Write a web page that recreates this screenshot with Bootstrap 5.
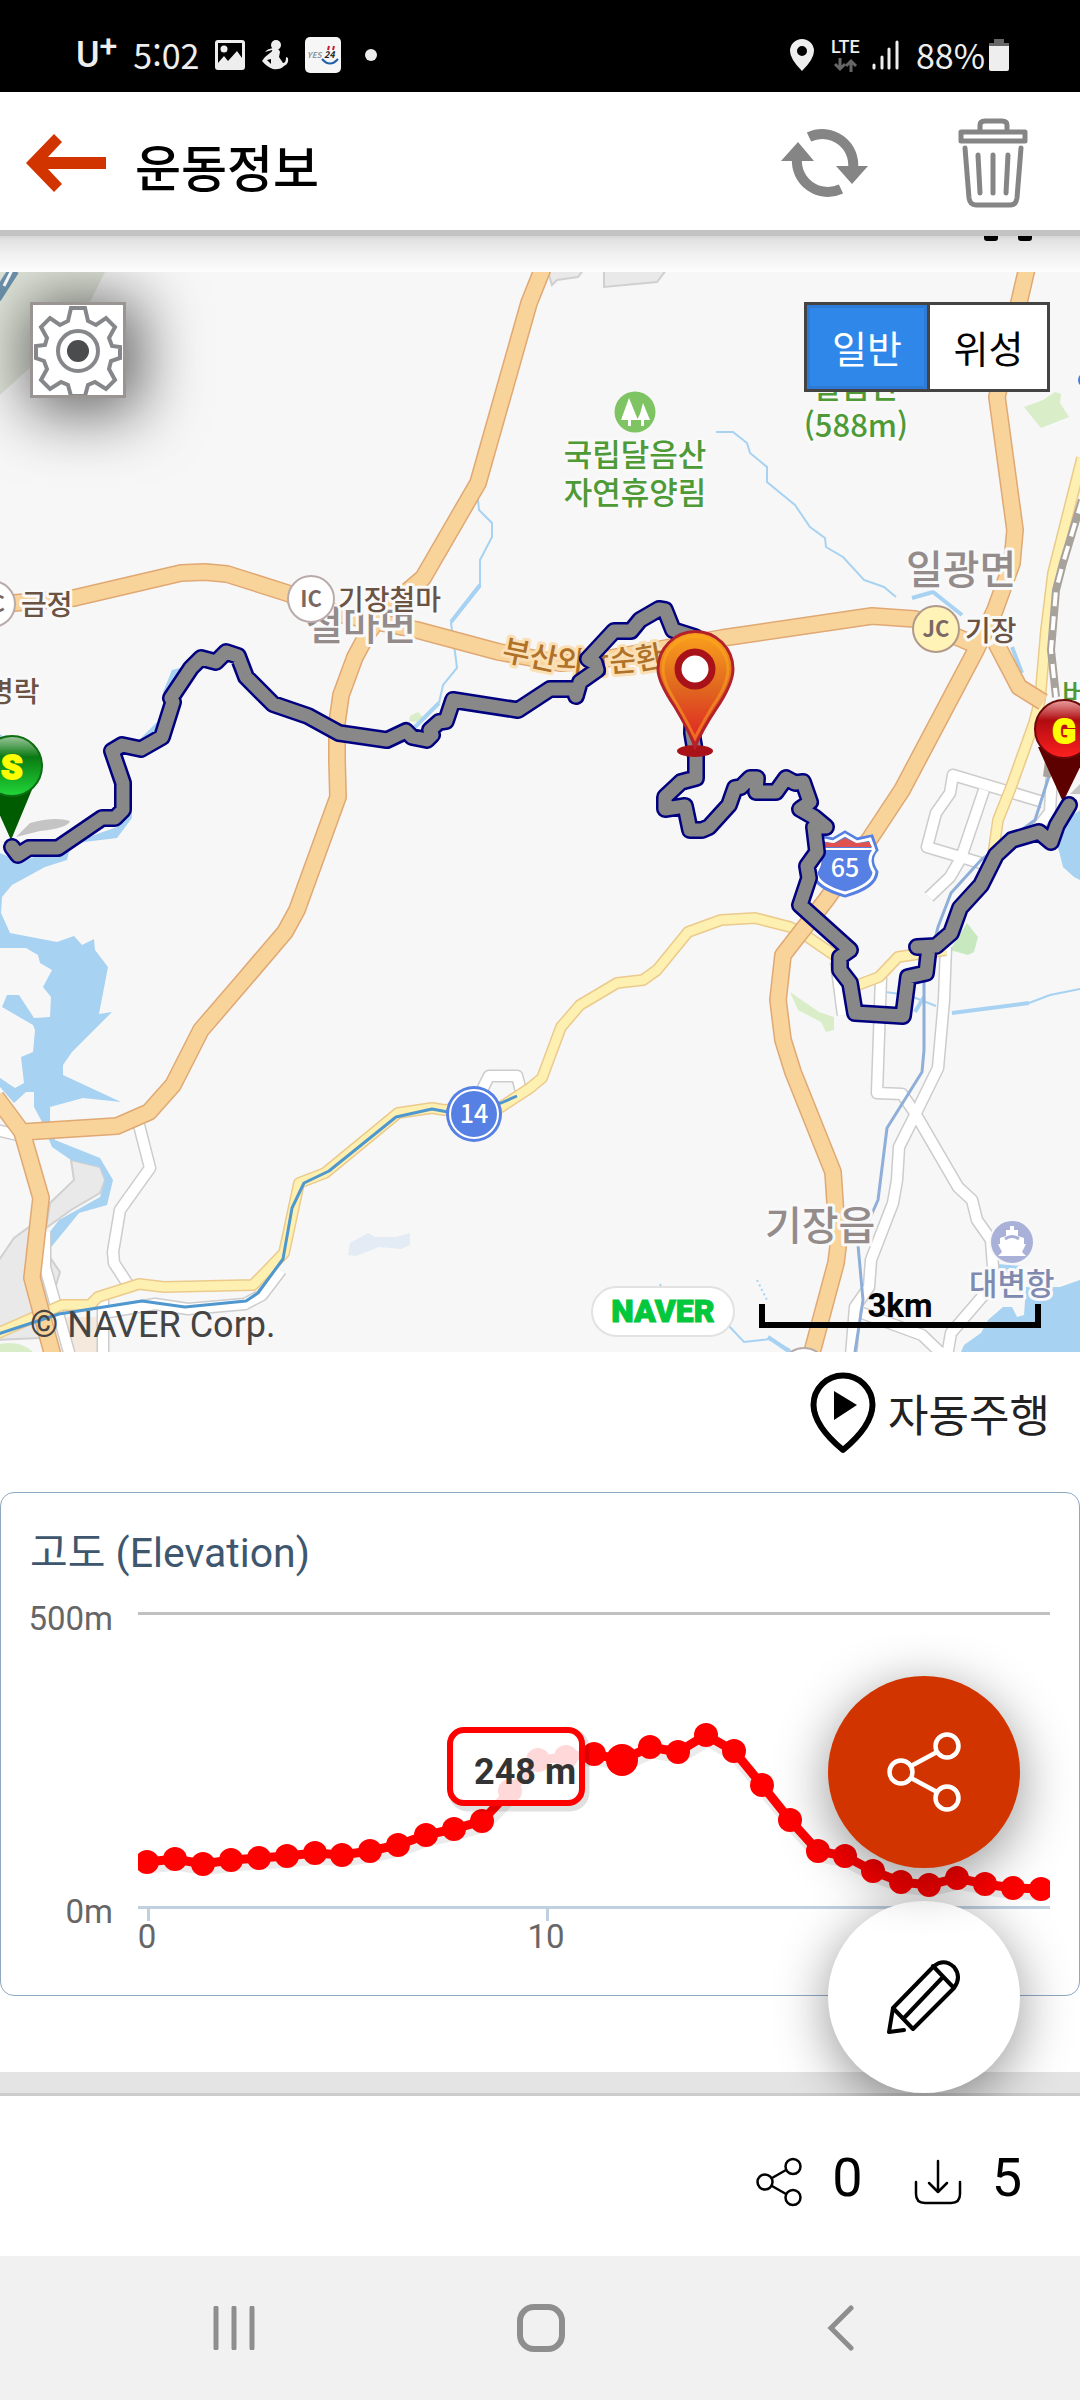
<!DOCTYPE html>
<html lang="ko">
<head>
<meta charset="utf-8">
<meta name="viewport" content="width=device-width, initial-scale=1">
<title>운동정보</title>
<link rel="stylesheet" href="https://cdn.jsdelivr.net/npm/bootstrap@5.3.0/dist/css/bootstrap.min.css">
<style>
  body { font-family: Roboto, "Noto Sans CJK KR", sans-serif; color: #000; background: #fff; }
  svg { display: block; flex: none; }
  .bare { background: none; border: 0; padding: 0; color: inherit; }
  .statusbar { height: 92px; background: #000; color: #eee; padding: 18px 71px 0 76px; font-family: "Noto Sans CJK KR", sans-serif; font-size: 34px; line-height: 40px; }
  .carrier { font: 500 36px/40px Roboto, sans-serif; }
  .carrier sup { font-size: 32px; line-height: 0; top: -10px; }
  .appbar { height: 144px; border-bottom: 6px solid #c3c3c3; padding: 4px 52px 0 26px; }
  .appbar h1 { font: 500 50px/60px "Noto Sans CJK KR", sans-serif; margin: 0 0 0 28px; padding-top: 4px; }
  .shade { height: 36px; background: linear-gradient(#d6d6d6 0, #e2e2e2 4px, #f0f0f0 18px, #fdfdfd 36px); padding-right: 48px; }
  .corner { width: 14px; height: 5px; background: #000; border-radius: 0 0 3px 3px; }
  .mapbox { background: #f7f7f7; overflow: hidden; }
  .mapbox > svg { width: 100%; height: auto; font-family: "Noto Sans CJK KR", sans-serif; font-weight: 500; }
  .casing, .fillroad, .route { fill: none; stroke-linejoin: round; }
  .halo { paint-order: stroke; stroke: #f9f9f9; stroke-width: 6px; stroke-linejoin: round; }
  .gear { position: absolute; left: 30px; top: 30px; width: 96px; height: 96px; background: #fff; border: 3px solid #9a9492; padding: 0; box-shadow: 6px 6px 64px 8px rgba(0,0,0,.62); }
  .maptype { position: absolute; right: 30px; top: 30px; border: 3px solid #444; background: #fff; }
  .maptype label { width: 120px; height: 84px; font: 400 38px/84px "Noto Sans CJK KR", sans-serif; text-align: center; cursor: pointer; }
  .maptype label + input + label { border-left: 3px solid #444; }
  .maptype .btn-check:checked + label { background: #3087ea; color: #fff; box-shadow: inset 0 0 0 3px #2d7bd6; }
  .credit { position: absolute; left: 30px; bottom: 5px; font-size: 36px; line-height: 44px; color: #444; }
  .mapfoot { position: absolute; right: 39px; bottom: 15px; gap: 24px; }
  .naverpill { width: 144px; height: 51px; border: 2px solid #e2e2e2; border-radius: 26px; background: #fff; color: #03c73c; font: 900 32px/47px Roboto, sans-serif; text-align: center; text-decoration: none; -webkit-text-stroke: 1px #03c73c; }
  .scalebar { width: 282px; height: 24px; border: 6px solid #000; border-top: 0; margin-top: 18px; margin-bottom: 9px; font: 700 33px/24px Roboto, sans-serif; text-align: center; }
  .scalebar span { display: block; margin-top: -10px; }
  .autorun { height: 140px; padding: 0 30px 18px 0; }
  .autorun button { font: 400 44px/60px "Noto Sans CJK KR", sans-serif; color: #222; gap: 12px; }
  .elev { border: 1px solid #8ea8c3; border-radius: 14px; overflow: hidden; background: #fff; }
  .elev h2 { font: 400 41px/50px Roboto, "Noto Sans CJK KR", sans-serif; color: #3e576f; margin: 0; padding: 35px 29px 0; }
  .elev svg { width: 100%; height: auto; font-family: Roboto, sans-serif; font-size: 33px; fill: #666; }
  .strip { height: 24px; margin-top: 76px; background: #e4e4e4; border-bottom: 3px solid #ccc; }
  .content { overflow: hidden; }
  .fabs { position: absolute; right: 60px; bottom: 3px; gap: 33px; }
  .fab { width: 192px; height: 192px; border-radius: 50%; border: 0; padding: 0; box-shadow: 0 12px 54px rgba(0,0,0,.42); }
  .fab.share { background: #d23400; position: relative; z-index: 1; }
  .fab.pen { background: #fff; }
  .counts { height: 160px; padding: 4px 58px 0 0; font-size: 54px; line-height: 60px; }
  .androidnav { height: 144px; background: #f1f1f1; padding: 0 94px 0 82px; }
</style>
<script src="https://cdn.jsdelivr.net/npm/bootstrap@5.3.0/dist/js/bootstrap.bundle.min.js"></script>
</head>
<body>

<div class="statusbar d-flex align-items-center justify-content-between">
  <div class="d-flex align-items-center">
    <span class="carrier me-3">U<sup>+</sup></span>
    <span>5:02</span>
    <svg class="ms-3" width="30" height="30" viewBox="0 0 30 30"><path fill="#eee" fill-rule="evenodd" d="M3 0h24q3 0 3 3v24q0 3-3 3H3q-3 0-3-3V3q0-3 3-3zM3 3v20l6-7 4 5 9-10 5 7V3z"/><circle cx="9" cy="9" r="3.500" fill="#eee"/></svg>
    <svg class="ms-3" width="28" height="30" viewBox="0 0 28 30"><circle cx="15" cy="5" r="5" fill="#eee"/><path fill="#eee" d="M12 8q6 0 7 4l-1 5 4 6q3 0 3-6l2 1q1 6-4 8-4 4-11 3-6-2-11-8l3-4 5-4q3-2 2-3l-7 2q2-3 8-4zM6 20l4 4v-5z" fill-rule="evenodd"/></svg>
    <svg class="ms-3" width="36" height="36" viewBox="0 0 36 36"><rect width="36" height="36" rx="5" fill="#f6f6f6"/><text x="2" y="21" font-size="8" font-weight="700" font-style="italic" fill="#8b98a5">YES</text><text x="19" y="21" font-size="9" font-weight="700" font-style="italic" fill="#222">24</text><path d="M24 9l-1 4M29 9l-1 4" stroke="#c9202c" stroke-width="2"/><path d="M17 22q8 9 16 0" stroke="#1f5fa8" stroke-width="2" fill="none"/></svg>
    <svg class="ms-4" width="12" height="12"><circle cx="6" cy="6" r="6" fill="#eee"/></svg>
  </div>
  <div class="d-flex align-items-center">
    <svg width="24" height="32" viewBox="0 0 24 32"><path fill="#eee" fill-rule="evenodd" d="M12 0a12 12 0 0 1 12 12q0 8-12 20Q0 20 0 12A12 12 0 0 1 12 0zm0 7a5 5 0 1 0 0 10 5 5 0 0 0 0-10z"/></svg>
    <svg class="ms-3" width="34" height="38" viewBox="0 -2 34 38"><text x="1" y="15" font-family="Roboto, sans-serif" font-weight="500" font-size="18" fill="#eee">LTE</text><path d="M10 20v9m-5-3 5 5 5-5M21 34v-9m-5 3 5-5 5 5" fill="none" stroke="#666" stroke-width="3"/></svg>
    <svg class="ms-2" width="28" height="32" viewBox="0 0 28 32"><path d="M2 29v-3M10 29V18M17 29V10M25 29V3" stroke="#eee" stroke-width="3" stroke-linecap="round"/></svg>
    <span class="ms-3">88%</span>
    <svg class="ms-1" width="20" height="32" viewBox="0 0 20 32"><path d="M5 0h10v4h5v4H0V4h5z" fill="#666"/><path d="M0 7h20v23q0 2-2 2H2q-2 0-2-2z" fill="#eee"/></svg>
  </div>
</div>

<header class="appbar d-flex align-items-center bg-white">
  <button class="bare" type="button" aria-label="뒤로"><svg width="81" height="58" viewBox="0 0 81 58"><path d="M0 29 28 0l8 8-14 15h58v12H22l14 15-8 8z" fill="#d23400"/></svg></button>
  <h1>운동정보</h1>
  <button class="bare ms-auto" type="button" aria-label="새로고침"><svg width="88" height="72" viewBox="0 0 88 72"><g fill="none" stroke="#858585" stroke-width="10"><path d="M28 10A31 31 0 0 1 72 42"/><path d="M60 62A31 31 0 0 1 16 31"/></g><path d="M55 39h32L71 57zM0 34h33L17 15z" fill="#858585"/></svg></button>
  <button class="bare" type="button" aria-label="삭제" style="margin-left:89px"><svg width="70" height="90" viewBox="0 0 70 90" fill="none" stroke="#858585" stroke-width="5" stroke-linecap="round" stroke-linejoin="round"><path d="M22 11V7q0-4 5-4h17q5 0 5 4v4M3 14h64v9H3zM7 30l4 50q1 7 7 7h34q6 0 7-7l4-50M20 37l2 38M35 37v38M50 37l-2 38"/></svg></button>
</header>
<div class="shade d-flex justify-content-end"><span class="corner"></span><span class="corner" style="margin-left:20px"></span></div>

<main class="content position-relative">
  <section class="mapbox position-relative">
    <svg viewBox="0 0 1080 1080" role="img" aria-label="지도">
      <defs>
        <linearGradient id="gPin" x1="0" y1="0" x2="0" y2="1"><stop offset="0" stop-color="#fba31c"/><stop offset=".5" stop-color="#e0661f"/><stop offset="1" stop-color="#e01c26"/></linearGradient>
        <linearGradient id="gS" x1="0" y1="0" x2="0" y2="1"><stop offset="0" stop-color="#9fc79f"/><stop offset=".35" stop-color="#0a7a12"/><stop offset="1" stop-color="#22d83a"/></linearGradient>
        <linearGradient id="gG" x1="0" y1="0" x2="0" y2="1"><stop offset="0" stop-color="#e9a0a0"/><stop offset=".35" stop-color="#b00c10"/><stop offset="1" stop-color="#ff2020"/></linearGradient>
        <path id="hw" d="M543-4 529 31 478 211 423 306 385 338 368 361 355 385 341 423 337 451 337 488 338 525 297 638 285 660 244 708 201 758 173 813 149 840 117 854 22 860M-4 825 22 860 41 926 32 1006 53 1084M-4 334 14 331 74 326 181 301 205 300 227 302 287 321 339 342 417 358 499 380 560 391 600 388 722 366 872 344 915 347 971 371M1027-4 997 125 1015 258 1012 291 995 338 976 378 902 518 871 565 826 628 783 683 778 728 783 768 793 800 833 900 838 975 836 991 811 1084M996 371 1019 415 1043 430"/>
        <path id="yl" d="M1082 186 1053 301 1046 358 1040 428 1034 451 1010 518 998 548 992 590M946 678 898 685 879 705 850 716M834 683 802 661 790 655 755 646 721 648 688 660 657 698 643 708 617 711 580 733 561 755 542 806 530 816 501 835 444 838 432 836 398 841 325 901 299 911 284 981 253 1013 164 1015 139 1012 98 1025 90 1033 62 1033-4 1062"/>
        <path id="wt" d="M139 853 150 896 120 938 113 980 114 991 129 1014M281 998 262 1023 245 1032 188 1037 155 1032 103 1041M103 1028V1084M45 960V995L70 1084M-4 858 18 863M482 818 489 804H517L522 823M1043 530 953 503 950 521 936 541 927 575 984 592M984 518 961 586 950 605 929 625M1053 480 1050 540 1030 565M946 675 944 728 938 796 915 843 899 875 897 908 893 931 871 988 869 1015 855 1035 851 1084M881 705 877 821 902 822 915 841 958 915 972 928 977 948 991 968 993 995 988 1018 951 1061 947 1084M862 1041 922 1063 944 1084M836 690 843 743"/>
        <path id="track" d="M12 575 18 583 29 576H58L102 546H115L123 538V511L112 479 122 473 141 477 162 465 173 430 171 426 191 396 201 386 216 390 226 380 238 384 246 405 273 432 308 444 339 461 387 468 406 459 412 465 427 468 432 463 430 458 439 450 446 449 453 428 518 438 550 417H574L576 424 580 410 597 398 595 391 588 387 614 359H631L640 348 659 337 665 338 673 358 695 365 692 461 696 485V506L681 510 665 525V537L685 534 690 558H702L709 555 729 533 735 516 741 515 750 506H757L756 520H776L786 506 795 511 803 510 810 530 800 537 814 545 826 555H814L817 580 807 594 809 606 800 633 850 678 840 685V698L850 711 855 741 903 744 908 705 926 701 929 675H917L936 674 951 661 960 636 981 613 996 583 1012 568 1039 560 1051 570 1057 553 1069 533"/>
        <path id="beltway" d="M501 388 545 397 590 402 640 398 690 389"/>
      </defs>
      <!-- land use -->
      <path fill="#e2e7dc" d="M0 0H105L80 50 0 123z"/>
      <path d="M14-2-4 26" stroke="#6d93ad" stroke-width="11"/><path d="M12-2 4 14" stroke="#fff" stroke-width="3"/>
      <g fill="#e9e9e9" stroke="#d0d0d0" stroke-width="2"><path d="M604-3V15L657 10 667-3zM547-3 552 13 557 8 578 5 584-3zM29 955 14 966-3 991V1068L40 1066 60 1000zM71 888 74 908 50 931 46 956 71 938 100 921 105 908 100 895z"/></g>
      <path fill="#d9edc8" d="M1024 135 1043 128 1055 120 1061 122 1060 131 1069 145 1041 156 1032 145zM790 720 819 740 834 745V758L826 760 821 750 798 738zM0 1072Q20 1068 33 1080H0zM410 444l8-4 5 5-6 5-8-1z"/>
      <path fill="#c8e8c0" d="M950 678 967 651 978 665 974 680 968 683z"/>
      <path fill="#f5e8dc" d="M66 1045H98V1080H72z"/>
      <path fill="#e3ebf4" d="M348 983 350 971 368 961 375 965H396L410 961V973L401 977 379 975 356 984z"/>
      <!-- water -->
      <g fill="#a7d2f2"><path d="M0 581 21 590 69 572 117 555 131 528 132 546 117 566 84 570 70 576 67 588 45 595 12 613 2 625 1 641 10 661 57 670 74 664 82 673 94 667 95 678 108 695 103 721 99 742 112 740 72 780 63 793V803L121 830 83 826 50 835V848L55 868 100 886 113 908 107 933 79 941 48 979 46 965 59 948 100 925 105 908 100 895 71 888 52 875 41 848 34 835V820H26L14 831 0 815V806L15 816 24 811 21 785 33 780 35 758 33 753 2 735 7 723H19L34 746 50 745 51 725 43 715 52 698 40 691 38 683 26 676H0zM172 398 180 396 168 425 163 420zM157 450 139 468H160zM1058 575 1070 545 1080 538V608L1074 605 1063 595zM961 1080 964 1073 981 1061 988 1048 1003 1035H1012L1017 1045 1024 1043 1026 1015H1060L1080 1008V1080zM0 462 10 470-2 540zM997 992 1022 994 1015 1008 1003 1006z"/></g>
      <g fill="none" stroke="#a7d2f2"><path stroke-width="2" d="M478 228 479 238 492 251V265L480 288V315L451 351 456 388 457 396 443 413 439 431M716 160H733L747 171 750 181 767 195V210L795 233 810 255 825 266 826 275 843 285 864 308 884 315 896 325M1029 731 1050 723 1080 717M728 1053 744 1070 770 1067 790 1078M885 720 908 723 936 734M660 1012 662 1017"/><path stroke-width="4" d="M480 313 451 350M439 431 415 455M912 326 933 320 962 343M952 741 1029 731M1012 375 1022 401M768 1065 790 1080M915 740 924 725"/></g>
      <path d="M757 1008 768 1030" stroke="#a7d2f2" stroke-width="2" stroke-dasharray="2 3"/>
      <!-- minor roads -->
      <use href="#wt" class="casing" stroke="#ccc" stroke-width="13"/><use href="#wt" class="fillroad" stroke="#fff" stroke-width="10"/>
      <path class="casing" stroke="#8fafd8" stroke-width="3" d="M1050 501 1035 548 981 588 951 621 938 655 924 711V778L922 800 887 856 878 928 858 973 863 1028 855 1080"/>
      <use href="#yl" class="casing" stroke="#ebca8c" stroke-width="12"/><use href="#yl" class="fillroad" stroke="#fef0b0" stroke-width="9"/>
      <path class="casing" stroke="#a8a29c" stroke-width="8" d="M1082 228 1063 291 1056 318 1051 378 1056 425M1050 480 1047 505"/><path class="casing" stroke="#fff" stroke-width="4" stroke-dasharray="14 10" d="M1082 228 1063 291 1056 318 1051 378 1056 425"/>
      <!-- highways -->
      <use href="#hw" class="casing" stroke="#e0a873" stroke-width="18"/><use href="#hw" class="fillroad" stroke="#f9d49a" stroke-width="15"/>
      <path class="casing" stroke="#4f97cf" stroke-width="3" d="M517 824 501 831 448 840 432 837 396 845 329 899 304 911 292 936 283 987 258 1021 246 1029 185 1035 142 1029 59 1042-2 1062"/>
      <!-- labels under the track -->
      <g class="halo" fill="#948b8b" font-size="40"><text x="306" y="368">철마면</text><text x="906" y="312">일광면</text><text x="765" y="968">기장읍</text></g>
      <text font-size="30" fill="#b07228" class="halo" style="stroke:#fbdfb5"><textPath href="#beltway">부산외곽순환</textPath></text>
      <g font-size="28"><g fill="#fff" stroke="#b9abaa" stroke-width="2"><circle cx="-8" cy="332" r="23"/><circle cx="311" cy="327" r="23"/><circle cx="936" cy="357" r="23" fill="#fff3b8" stroke="#b0998a"/><circle cx="804" cy="1099" r="23"/></g>
        <g fill="#6b5344" class="halo"><text x="21" y="343">금정</text><text x="338" y="338">기장철마</text><text x="965" y="369">기장</text><text x="-12" y="430">명락</text></g>
        <g fill="#7a6864" font-size="22" font-weight="700" text-anchor="middle"><text x="311" y="335">IC</text><text x="-6" y="340">IC</text><text x="936" y="365">JC</text></g></g>
      <g fill="#4d9a36" font-size="31" text-anchor="middle" class="halo"><text x="635" y="194">국립달음산</text><text x="635" y="232">자연휴양림</text><text x="856" y="126">달음산</text><text x="856" y="165">(588m)</text></g>
      <text x="1062" y="432" font-size="28" fill="#4d9a36" class="halo">버</text>
      <text x="969" y="1023" font-size="31" fill="#808ab0" class="halo">대변항</text>
      <circle cx="635" cy="140" r="20.500" fill="#7fc462"/><path fill="#fff" d="M629 126l9 22h-7v6h-3v-6h-7zM643 131l7 17h-6v6h-3v-6h-4l3-6z"/>
      <circle cx="1012" cy="970" r="22" fill="#a9b1d8" stroke="#f7f7f7" stroke-width="2"/><path fill="#fff" d="M1010 954h4v4h4v6l6 2v6h2l-4 8 4 4h-28l4-4-4-8h2v-6l6-2v-6h4z"/><path d="M1005 967q7-5 14 0" fill="none" stroke="#a9b1d8" stroke-width="3"/>
      <circle cx="1085" cy="108" r="7" fill="#4b78e6"/>
      <circle cx="474" cy="842" r="28" fill="#5680e3"/><circle cx="474" cy="842" r="24" fill="none" stroke="#fff" stroke-width="2"/><text x="474" y="851" fill="#fff" font-size="25" text-anchor="middle">14</text>
      <path d="M845 560 857 567 872 564 877 578Q868 587 877 600 876 616 845 624 814 616 813 600 822 587 813 578L818 564 833 567z" fill="#5680e3" stroke="#5680e3" stroke-width="3"/><path d="M845 563 857 570 870 567 874 578Q866 588 874 600 873 613 845 621 817 613 816 600 824 588 816 578L820 567 833 570z" fill="#5680e3" stroke="#fff" stroke-width="3"/><path fill="#e0524d" d="M820 570 835 571 845 566 856 571 869 570 872 575H818z"/><path d="M817 577H873" stroke="#fff" stroke-width="2"/><text x="845" y="605" fill="#fff" font-size="25" text-anchor="middle">65</text>
      <!-- start and goal markers -->
      <path d="M16 565 30 551Q55 544 70 549 68 556 40 559z" fill="#c4c4c4"/><path d="M1070 522 1082 510V522z" fill="#c4c4c4"/>
      <path d="M-15 510 11 568 36 508z" fill="#005c00"/><circle cx="12" cy="494" r="30" fill="url(#gS)" stroke="#0c6d12" stroke-width="2"/>
      <path d="M1038 475 1063 530 1090 475z" fill="#5c0000"/><circle cx="1064" cy="457" r="29" fill="url(#gG)" stroke="#6d0808" stroke-width="2"/>
      <g font-family="Roboto, sans-serif" font-weight="900" font-size="34" fill="#ff0" stroke="#ff0" stroke-width="2" text-anchor="middle"><text x="12" y="507">S</text><text x="1064" y="471">G</text></g>
      <use href="#track" class="route" stroke="#000080" stroke-width="18" stroke-linecap="round"/><use href="#track" class="route" stroke="#888" stroke-width="13" stroke-linecap="round"/>
      <ellipse cx="695" cy="479" rx="18" ry="6" fill="#a81218"/>
      <path d="M695 475Q690 460 675 435 658 410 658 397A37 37 0 0 1 733 397Q733 412 716 437 702 458 695 475z" fill="url(#gPin)" stroke="#b3222a" stroke-width="3"/><path d="M695 466Q682 440 672 424 663 408 663 397A32 32 0 0 1 728 397Q728 410 718 426 706 444 695 466z" fill="none" stroke="#fbab20" stroke-opacity=".5" stroke-width="3"/>
      <circle cx="695" cy="397" r="17" fill="#fff" stroke="#a81218" stroke-width="7"/>
    </svg>
    <button class="gear" type="button" aria-label="설정"><svg width="90" height="90" viewBox="0 0 90 90"><path d="M38 3h14l3 13 8 4 10-7 9 9-6 11 3 8 8 1v11l-9 3-2 8 6 11-9 9-11-7-7 3-3 11H38l-3-11-7-3-11 7-9-9 6-11-3-8-8-3V41l9-1 2-7-6-11 9-9 10 7 8-4z" fill="#fff" stroke="#85878a" stroke-width="4"/><circle cx="45" cy="46" r="20" fill="none" stroke="#85878a" stroke-width="4"/><circle cx="45" cy="46" r="11" fill="#4b4c4e"/></svg></button>
    <div class="maptype d-flex" role="group" aria-label="지도 종류">
      <input class="btn-check" type="radio" name="maptype" id="mtNormal" checked><label for="mtNormal">일반</label>
      <input class="btn-check" type="radio" name="maptype" id="mtSat"><label for="mtSat">위성</label>
    </div>
    <div class="credit">© NAVER Corp.</div>
    <div class="mapfoot d-flex align-items-center"><a class="naverpill" href="#">NAVER</a><div class="scalebar"><span>3km</span></div></div>
  </section>

  <div class="autorun d-flex justify-content-end align-items-center">
    <button class="bare d-flex align-items-center" type="button"><svg width="66" height="82" viewBox="0 0 66 82"><path d="M33 3.500A29.500 29.500 0 0 1 62.500 33Q62 54 33 78 4 54 3.500 33A29.500 29.500 0 0 1 33 3.500z" fill="none" stroke="#000" stroke-width="6" stroke-linejoin="round"/><path d="M24 19v29l23-15z"/></svg><span>자동주행</span></button>
  </div>

  <section class="elev">
    <h2>고도 (Elevation)</h2>
    <svg viewBox="1 1578 1078 417" role="img" aria-label="고도 그래프">
      <defs><clipPath id="plot"><path d="M138 1600H1050V1920H138z"/></clipPath></defs>
      <path d="M138 1613.500H1050" stroke="#c0c0c0" stroke-width="3"/><path d="M138 1907.500H1050M148.500 1907V1921M547.500 1907V1921" stroke="#c0d0e0" stroke-width="3"/>
      <g text-anchor="end"><text x="113" y="1630">500m</text><text x="113" y="1923">0m</text></g>
      <g text-anchor="middle"><text x="147" y="1948">0</text><text x="546" y="1948">10</text></g>
      <g clip-path="url(#plot)"><g id="series"></g></g>
      <rect x="452" y="1732" width="134" height="76" rx="16" fill="none" stroke="#000" stroke-opacity=".12" stroke-width="7"/>
      <rect x="450" y="1730" width="132" height="73" rx="14" fill="#fff" fill-opacity=".85" stroke="#f00" stroke-width="6"/>
      <text x="474" y="1784" font-size="36" font-weight="700" fill="#333">248 m</text>
    </svg>
  </section>
  <div class="strip"></div>

  <div class="fabs d-flex flex-column">
    <button class="fab share" type="button" aria-label="공유"><svg class="mx-auto" width="74" height="82" viewBox="0 0 74 82" fill="none" stroke="#fff" stroke-width="4.500"><circle cx="14" cy="41" r="11.500"/><circle cx="60" cy="15" r="11.500"/><circle cx="60" cy="67" r="11.500"/><path d="M24 35 50 21M24 47 50 61"/></svg></button>
    <button class="fab pen" type="button" aria-label="편집"><svg class="mx-auto" width="74" height="74" viewBox="0 0 74 74" fill="none" stroke="#000" stroke-width="4" stroke-linejoin="round" stroke-linecap="round"><path d="M6 48 47 6Q57-2 67 7 75 17 67 28L26 69zM6 48 2 72 17 70M46 6 66 27M56 17 17 58"/></svg></button>
  </div>
</main>

<footer class="counts d-flex align-items-center justify-content-end">
  <svg width="46" height="50" viewBox="0 0 46 50" fill="none" stroke="#000" stroke-width="2.500" class="mt-2"><circle cx="9" cy="25" r="7.500"/><circle cx="37" cy="9.500" r="7.500"/><circle cx="37" cy="40.500" r="7.500"/><path d="M16 21 30 13M16 29 30 37"/></svg>
  <span style="margin-left:30px">0</span>
  <svg style="margin-left:51px" width="48" height="46" viewBox="0 0 48 46" fill="none" stroke="#000" stroke-width="2.500" stroke-linecap="round" stroke-linejoin="round" class="mt-2"><path d="M24 2V33M15 24 24 33 33 24M2 23V35Q2 44 11 44H37Q46 44 46 35V23"/></svg>
  <span style="margin-left:30px">5</span>
</footer>

<nav class="androidnav d-flex align-items-center justify-content-around" aria-label="시스템">
  <button class="bare" type="button" aria-label="최근"><svg width="42" height="44" viewBox="0 0 42 44"><path d="M3 2V42M21 2V42M39 2V42" stroke="#8e8e8e" stroke-width="5" stroke-linecap="round"/></svg></button>
  <button class="bare" type="button" aria-label="홈"><svg width="48" height="48" viewBox="0 0 48 48"><rect x="3" y="3" width="42" height="42" rx="14" fill="none" stroke="#8e8e8e" stroke-width="6"/></svg></button>
  <button class="bare" type="button" aria-label="뒤로"><svg width="28" height="46" viewBox="0 0 28 46"><path d="M24 3 4 23 24 43" fill="none" stroke="#8e8e8e" stroke-width="5" stroke-linecap="round"/></svg></button>
</nav>

<script>
  const pts = [[147,1862],[175,1859],[203,1864],[231,1860],[259,1858],[287,1856],[315,1853],[342,1855],[370,1851],[398,1845],[426,1835],[454,1829],[482,1821],[510,1791],[538,1760],[566,1757],[594,1754],[622,1760],[650,1747],[678,1752],[706,1735],[734,1751],[762,1785],[790,1820],[818,1851],[845,1856],[873,1871],[901,1882],[929,1885],[957,1878],[985,1884],[1013,1888],[1041,1889]];
  const line = pts.map(p => p.join(',')).join(' ');
  document.getElementById('series').innerHTML =
    `<polyline points="${line}" fill="none" stroke="#000" stroke-opacity=".08" stroke-width="13" transform="translate(2 5)"/>` +
    `<polyline points="${line}" fill="none" stroke="#f00" stroke-width="9"/>` +
    pts.map((p, i) => `<circle cx="${p[0]}" cy="${p[1]}" r="${i === 17 ? 16 : 12}" fill="#f00"/>`).join('');
</script>
</body>
</html>
